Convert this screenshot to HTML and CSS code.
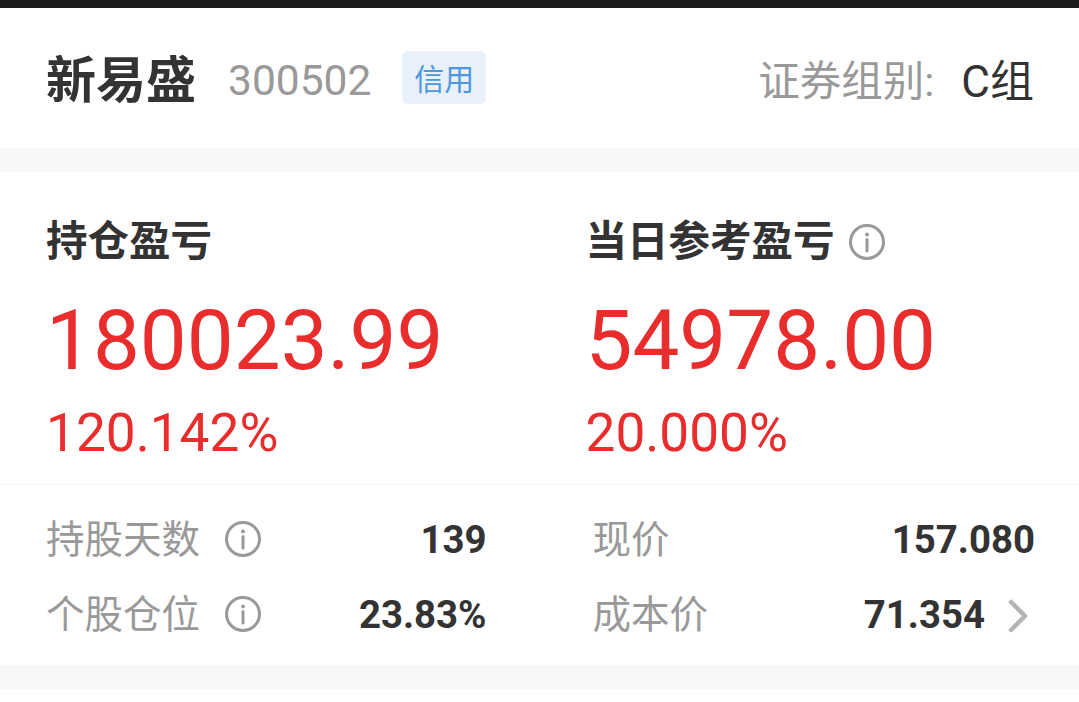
FILE: index.html
```html
<!DOCTYPE html>
<html lang="zh-CN">
<head>
<meta charset="utf-8">
<title>新易盛</title>
<link rel="stylesheet" href="styles.css">
</head>
<body>
<div class="statusbar"></div>
<header class="header">
  <div class="stock">
    <span class="name">新易盛</span>
    <span class="code">300502</span>
    <span class="badge">信用</span>
  </div>
  <div class="group"><span class="group-label">证券组别:</span><span class="group-value">C组</span></div>
</header>
<div class="gap"></div>
<section class="card">
  <div class="pnl">
    <div class="pnl-col">
      <div class="pnl-title">持仓盈亏</div>
      <div class="pnl-value">180023.99</div>
      <div class="pnl-pct">120.142%</div>
    </div>
    <div class="pnl-col">
      <div class="pnl-title">当日参考盈亏<svg class="info info-title" viewBox="0 0 36 36"><circle cx="18" cy="18" r="16.5"/><path d="M18 15.5V27"/><circle class="dot" cx="18" cy="10.5" r="1.9"/></svg></div>
      <div class="pnl-value">54978.00</div>
      <div class="pnl-pct">20.000%</div>
    </div>
  </div>
  <div class="stats">
    <div class="stats-col">
      <div class="row"><span class="label">持股天数</span><svg class="info" viewBox="0 0 36 36"><circle cx="18" cy="18" r="16.5"/><path d="M18 15.5V27"/><circle class="dot" cx="18" cy="10.5" r="1.9"/></svg><span class="val">139</span></div>
      <div class="row"><span class="label">个股仓位</span><svg class="info" viewBox="0 0 36 36"><circle cx="18" cy="18" r="16.5"/><path d="M18 15.5V27"/><circle class="dot" cx="18" cy="10.5" r="1.9"/></svg><span class="val">23.83%</span></div>
    </div>
    <div class="stats-col stats-right">
      <div class="row"><span class="label">现价</span><span class="val">157.080</span></div>
      <div class="row"><span class="label">成本价</span><span class="val">71.354</span><svg class="chev" viewBox="0 0 20 34"><path d="M3 3L17 17L3 31"/></svg></div>
    </div>
  </div>
</section>
<div class="gap"></div>
</body>
</html>
```
FILE: styles.css
```css
* { box-sizing: border-box; }
html, body { margin: 0; padding: 0; background: #fff; }
body {
  font-family: Roboto, "Noto Sans CJK SC", sans-serif;
  color: #333;
  overflow: hidden;
}
.statusbar { height: 8px; background: #1c1c1c; }
.header {
  height: 140px;
  padding: 0 45px 0 46px;
  display: flex;
  align-items: center;
  justify-content: space-between;
}
.stock { display: flex; align-items: center; }
.name { font-size: 50px; font-weight: 700; line-height: 1; margin-top: 6px; }
.code { font-size: 42.5px; color: #999; margin-left: 32px; line-height: 1; margin-top: 6px; }
.badge {
  margin-left: 31px;
  margin-top: -2px;
  width: 84px;
  height: 53px;
  border-radius: 6px;
  background: #e8f0f9;
  color: #4d97e0;
  font-size: 30px;
  display: flex;
  align-items: center;
  justify-content: center;
}
.group { display: flex; align-items: center; line-height: 1; padding-top: 7px; }
.group-label { color: #999; font-size: 41.5px; width: 203px; }
.group-value { font-size: 44px; }
.gap { height: 24px; background: #f6f7f9; }
.card { height: 493px; display: flex; flex-direction: column; }
.pnl {
  height: 313px;
  display: grid;
  grid-template-columns: 1fr 1fr;
  border-bottom: 1px solid #f5f5f5;
  padding-top: 46px;
}
.pnl-col { padding-left: 46px; }
.pnl-title {
  font-size: 41.5px;
  font-weight: 700;
  line-height: 48px;
  display: flex;
  align-items: center;
}
.pnl-value {
  font-size: 83.5px;
  line-height: 98px;
  color: #e92c2c;
  margin-top: 26px;
}
.pnl-pct {
  font-size: 53.2px;
  line-height: 60px;
  color: #e92c2c;
  margin-top: 13px;
}
.info {
  width: 36px;
  height: 36px;
  flex: none;
  fill: none;
  stroke: #999;
  stroke-width: 3;
  stroke-linecap: round;
}
.info .dot { fill: #999; stroke: none; }
.info-title { margin-left: 14px; }
.stats {
  flex: 1;
  display: grid;
  grid-template-columns: 1fr 1fr;
  padding-top: 18px;
}
.stats-col { padding-left: 46px; padding-right: 53px; }
.stats-right { padding-left: 53px; padding-right: 44px; }
.row {
  height: 75px;
  display: flex;
  align-items: center;
}
.label { font-size: 38.5px; color: #999; line-height: 1; }
.row .info { margin-left: 25px; margin-top: -3px; }
.val { margin-left: auto; font-size: 38.4px; font-weight: 700; line-height: 1; }
.chev {
  width: 20px;
  height: 34px;
  margin-left: 23px;
  margin-right: 7px;
  fill: none;
  stroke: #b5b5b5;
  stroke-width: 4.5;
  stroke-linecap: round;
  stroke-linejoin: round;
}
```
